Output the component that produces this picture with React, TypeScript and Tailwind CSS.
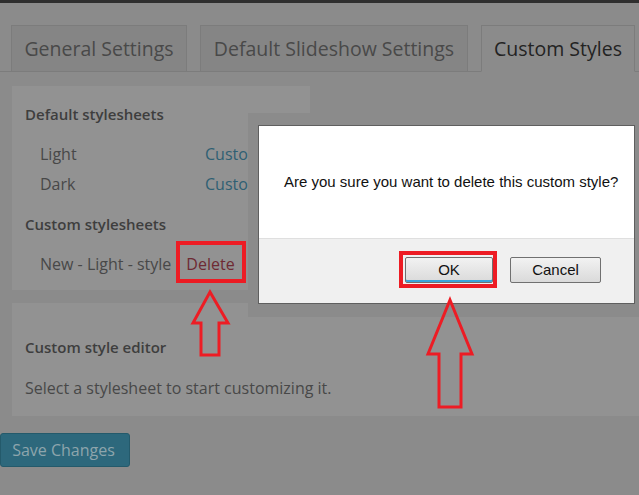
import React from 'react';

const tabs = [
  { label: 'General Settings', width: 'w-[176px]', active: false },
  { label: 'Default Slideshow Settings', width: 'w-[268px]', active: false },
  { label: 'Custom Styles', width: 'w-[154px]', active: true },
];

const Arrows: React.FC = () => (
  <svg className="absolute inset-0 pointer-events-none" width="639" height="495" viewBox="0 0 639 495">
    <polygon
      points="210,292 228,323 219,323 219,355 201,355 201,323 193,323"
      fill="none"
      stroke="#ed1c24"
      strokeWidth="3"
      strokeLinejoin="miter"
    />
    <polygon
      points="450,300 472,354 461,354 461,407 439,407 439,354 428,354"
      fill="none"
      stroke="#ed1c24"
      strokeWidth="3"
      strokeLinejoin="miter"
    />
  </svg>
);

const App: React.FC = () => {
  return (
    <div className="relative w-[639px] h-[495px] overflow-hidden bg-[#8b8b8b] font-['Open_Sans',sans-serif]">
      <div className="h-[3px] bg-[#2f2f2f]" />

      {/* tabs */}
      <div className="mt-[22px] flex gap-[13px] pl-[11px] border-b border-[#7c7c7c] h-[47px]">
        {tabs.map(t => (
          <div
            key={t.label}
            className={`${t.width} h-[47px] flex items-center justify-center border border-[#7c7c7c] text-[19.5px] ${
              t.active ? 'bg-[#8b8b8b] border-b-[#8b8b8b] text-[#232323]' : 'bg-[#858585] text-[#494949]'
            }`}
          >
            {t.label}
          </div>
        ))}
      </div>

      {/* default / custom stylesheets */}
      <div className="mt-[14px] ml-[12px] w-[298px] bg-[#929292] pl-[13px] pt-[18px] pb-[11px]">
        <div className="text-[15px] leading-[20px] font-semibold text-[#3e3e3e]">Default stylesheets</div>
        <div className="mt-[15px] pl-[15px] text-[16px] text-[#484848]">
          <div className="flex h-[30px] items-center">
            <span className="w-[165px]">Light</span>
            <span className="text-[#2f5f73]">Customize</span>
          </div>
          <div className="flex h-[30px] items-center">
            <span className="w-[165px]">Dark</span>
            <span className="text-[#2f5f73]">Customize</span>
          </div>
        </div>
        <div className="mt-[15px] text-[15px] leading-[20px] font-semibold text-[#3e3e3e]">Custom stylesheets</div>
        <div className="mt-[15px] pl-[15px] text-[16px] text-[#484848]">
          <div className="flex h-[30px] items-center gap-[15px]">
            <span>New - Light - style</span>
            <span className="text-[#6e2a33]">Delete</span>
          </div>
        </div>
      </div>

      {/* custom style editor */}
      <div className="mt-[13px] ml-[12px] bg-[#929292] pl-[13px] pt-[34px] pb-[18px] h-[113px]">
        <div className="text-[15px] leading-[20px] font-semibold text-[#3e3e3e]">Custom style editor</div>
        <div className="mt-[21px] text-[16px] leading-[20px] text-[#484848]">Select a stylesheet to start customizing it.</div>
      </div>

      <button className="mt-[17px] w-[130px] h-[34px] rounded-[3px] bg-[#2d687c] border border-[#245a6b] pr-[3px] text-[16px] text-[#8ea5ac]">
        Save Changes
      </button>

      {/* dialog frame */}
      <div className="absolute left-[248px] top-[113px] w-[391px] h-[204px] bg-[#8b8b8b]" />

      {/* confirm dialog */}
      <div className="absolute left-[258px] top-[125px] w-[377px] h-[179px] border border-[#5f5f5f] flex flex-col font-['Liberation_Sans',Arial,sans-serif]">
        <div className="h-[112px] bg-white flex items-center pl-[25px] text-[15px] text-[#111]">
          Are you sure you want to delete this custom style?
        </div>
        <div className="flex-1 bg-[#f0f0f0] border-t border-[#dfdfdf] flex justify-end items-start pt-[18px] pr-[33px] gap-[17px]">
          <button className="w-[88px] h-[26px] border border-[#707070] rounded-[2px] bg-gradient-to-b from-[#f2f2f2] to-[#dadada] text-[15px] text-[#111] shadow-[inset_0_-2px_0_#3ba5dc]">
            OK
          </button>
          <button className="w-[91px] h-[26px] border border-[#707070] rounded-[2px] bg-gradient-to-b from-[#f2f2f2] to-[#dadada] text-[15px] text-[#111]">
            Cancel
          </button>
        </div>
      </div>

      {/* highlight boxes */}
      <div className="absolute left-[176px] top-[241px] w-[70px] h-[42px] border-4 border-[#ed1c24]" />
      <div className="absolute left-[399px] top-[251px] w-[98px] h-[37px] border-4 border-[#ed1c24]" />

      <Arrows />
    </div>
  );
};

export default App;
